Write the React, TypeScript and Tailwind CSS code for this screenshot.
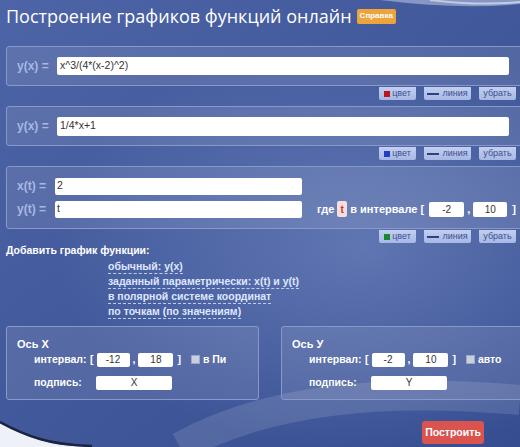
import React from "react";

const font = { fontFamily: '"Liberation Sans", Arial, sans-serif' };

function SmallBtns({ color }: { color: string }) {
  return (
    <div className="flex justify-end gap-[8px] pr-[4px] mt-[1px] h-[13px]">
      <div className="w-[37px] h-[13px] rounded-b-[2px] bg-gradient-to-b from-[#c3cff0] to-[#a7b8e4] flex items-center justify-center gap-[2px] text-[9px] text-[#3b4f8e] whitespace-nowrap">
        <span className={`inline-block w-[6px] h-[6px] ${color}`} />
        <span>цвет</span>
      </div>
      <div className="w-[47px] h-[13px] rounded-b-[2px] bg-gradient-to-b from-[#c3cff0] to-[#a7b8e4] flex items-center justify-center gap-[3px] text-[9px] text-[#3b4f8e] whitespace-nowrap">
        <span className="inline-block w-[12px] h-[2px] bg-[#2d3f86]" />
        <span>линия</span>
      </div>
      <div className="w-[37px] h-[13px] rounded-b-[2px] bg-gradient-to-b from-[#c3cff0] to-[#a7b8e4] flex items-center justify-center text-[9px] text-[#3b4f8e] whitespace-nowrap">
        убрать
      </div>
    </div>
  );
}

function Box({ children, cls }: { children: React.ReactNode; cls: string }) {
  return (
    <div className={`shrink-0 bg-white rounded-[2px] text-[#333] flex items-center whitespace-nowrap ${cls}`}>{children}</div>
  );
}

const panel = "border border-[#8898cc] rounded-[3px] bg-[rgba(255,255,255,0.1)]";
const lbl = "shrink-0 whitespace-nowrap text-[12px] font-bold text-[#a9b7e2]";

function Axis({ title, a, b, chk, label, w }: { title: string; a: string; b: string; chk: string; label: string; w: string }) {
  return (
    <div className={`shrink-0 ${w} h-[74px] pt-[10px] pl-[10px] text-[10.5px] font-bold whitespace-nowrap ${panel}`}>
      <div className="leading-[14px] text-[11px]">{title}</div>
      <div className="flex items-center mt-[1px] pl-[17px]">
        <span className="w-[56px] shrink-0">интервал:</span>
        <span>[</span>
        <Box cls="ml-[3px] w-[33px] h-[14px] justify-center text-[10px] font-normal">{a}</Box>
        <span className="mx-[3px]">,</span>
        <Box cls="w-[35px] h-[14px] justify-center text-[10px] font-normal">{b}</Box>
        <span className="ml-[4px]">]</span>
        <span className="ml-[10px] w-[9px] h-[9px] bg-[#c7cfe0] border border-[#a0a8c0]" />
        <span className="ml-[3px]">{chk}</span>
      </div>
      <div className="flex items-center mt-[7px] pl-[17px]">
        <span className="w-[62px] shrink-0">подпись:</span>
        <Box cls="w-[76px] h-[14px] justify-center text-[10px] font-normal">{label}</Box>
      </div>
    </div>
  );
}

export default function App() {
  return (
    <div className="relative w-[520px] h-[447px] overflow-hidden text-white" style={font}>
      {/* background */}
      <div className="absolute inset-0 bg-gradient-to-br from-[#4d64a6] via-[#41589a] to-[#364d90]" />
      <div className="absolute inset-0 bg-[radial-gradient(ellipse_at_70%_55%,rgba(160,180,230,0.35),rgba(0,0,0,0)_60%)]" />
      <svg className="absolute inset-0" width="520" height="447" viewBox="0 0 520 447">
        <path d="M380 0 Q460 10 520 4 L520 0 Z" fill="#c9d4ee" opacity="0.5" />
        <path d="M430 0 Q480 6 520 2" stroke="#ffffff" strokeOpacity="0.5" strokeWidth="2" fill="none" />
        <path d="M0 423 Q20 434 40 440 Q60 446 90 447 L0 447 Z" fill="#eef1f7" />
        <path d="M0 422 Q20 433 40 439 Q60 445 92 446" stroke="#1d2440" strokeWidth="2.5" fill="none" />
        <path d="M180 447 Q300 380 520 400" stroke="#ffffff" strokeOpacity="0.12" strokeWidth="30" fill="none" />
      </svg>

      <div className="relative flex flex-col">
        {/* title */}
        <div className="flex items-center h-[31px] pl-[6px] gap-[5px]">
          <span
            className="text-[18px] leading-none text-white whitespace-nowrap"
            style={{ fontFamily: '"Open Sans", "Noto Sans", sans-serif' }}
          >
            Построение графиков функций онлайн
          </span>
          <span className="bg-[#eea43c] rounded-[2px] px-[3px] h-[15px] flex items-center text-[8px] font-bold text-white mt-[1px]">
            Справка
          </span>
        </div>

        {/* panel 1 */}
        <div className={`ml-[6px] mt-[15px] w-[530px] h-[40px] flex items-center ${panel}`}>
          <span className={`w-[50px] pl-[10px] ${lbl}`}>y(x) =</span>
          <Box cls="w-[452px] h-[18px] pl-[3px] text-[10.5px]">x^3/(4*(x-2)^2)</Box>
        </div>
        <SmallBtns color="bg-[#c1121f]" />

        {/* panel 2 */}
        <div className={`ml-[6px] mt-[6px] w-[530px] h-[40px] flex items-center ${panel}`}>
          <span className={`w-[50px] pl-[10px] ${lbl}`}>y(x) =</span>
          <Box cls="w-[452px] h-[19px] pl-[3px] text-[10.5px]">1/4*x+1</Box>
        </div>
        <SmallBtns color="bg-[#1f3fc4]" />

        {/* panel 3 */}
        <div className={`ml-[6px] mt-[6px] w-[530px] h-[63px] flex flex-col justify-center gap-[5px] ${panel}`}>
          <div className="flex items-center">
            <span className={`w-[48px] pl-[10px] ${lbl}`}>x(t) =</span>
            <Box cls="w-[247px] h-[17px] pl-[2px] text-[10.5px]">2</Box>
          </div>
          <div className="flex items-center whitespace-nowrap">
            <span className={`w-[48px] pl-[10px] ${lbl}`}>y(t) =</span>
            <Box cls="w-[247px] h-[17px] pl-[2px] text-[10.5px]">t</Box>
            <span className="ml-[15px] text-[11px] font-bold text-white">где</span>
            <span className="ml-[3px] w-[10px] h-[16px] bg-[#f6dede] rounded-[2px] text-[#c0392b] text-[10px] font-bold flex items-center justify-center">t</span>
            <span className="ml-[3px] text-[11px] font-bold text-white">в интервале [</span>
            <Box cls="ml-[5px] w-[35px] h-[15px] justify-center text-[10px]">-2</Box>
            <span className="mx-[3px] text-[11px] font-bold">,</span>
            <Box cls="w-[34px] h-[15px] justify-center text-[10px]">10</Box>
            <span className="ml-[5px] text-[11px] font-bold">]</span>
          </div>
        </div>
        <SmallBtns color="bg-[#17882f]" />

        {/* add links */}
        <div className="pl-[6px] mt-[0px] text-[10.5px] font-bold leading-[14px] whitespace-nowrap">Добавить график функции:</div>
        <div className="pl-[108px] flex flex-col text-[10.5px] font-bold text-[#dfe7ff] leading-[14px] mt-[2px] items-start whitespace-nowrap">
          <span className="border-b border-dashed border-[#dfe7ff]/80">обычный: y(x)</span>
          <span className="border-b border-dashed border-[#dfe7ff]/80">заданный параметрически: x(t) и y(t)</span>
          <span className="border-b border-dashed border-[#dfe7ff]/80">в полярной системе координат</span>
          <span className="border-b border-dashed border-[#dfe7ff]/80">по точкам (по значениям)</span>
        </div>

        {/* axes */}
        <div className="flex mt-[7px] pl-[6px] gap-[22px]">
          <Axis title="Ось X" a="-12" b="18" chk="в Пи" label="X" w="w-[253px]" />
          <Axis title="Ось У" a="-2" b="10" chk="авто" label="Y" w="w-[260px]" />
        </div>

        <div className="flex justify-end pr-[36px] mt-[21px]">
          <div className="w-[62px] h-[23px] bg-[#d9534f] rounded-[3px] flex items-center justify-center text-[10.5px] font-bold text-white">
            Построить
          </div>
        </div>
      </div>
    </div>
  );
}
